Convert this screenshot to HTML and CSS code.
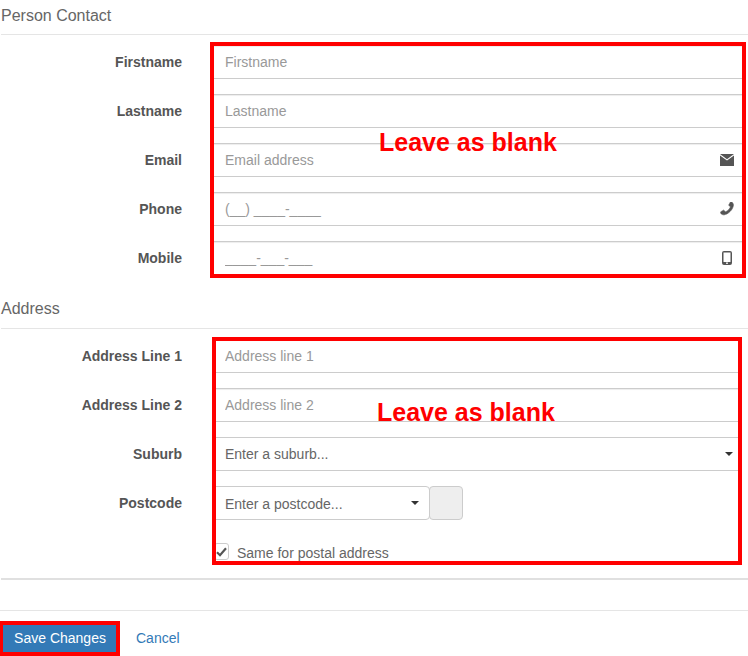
FILE: index.html
```html
<!DOCTYPE html>
<html lang="en">
  <head>
    <meta charset="UTF-8" />
    <title>Person Contact</title>
    <link rel="stylesheet" href="styles.css">
  </head>
  <body>
    <div class="page">
      <form class="contact-form">
        <h2 class="section-title">Person Contact</h2>
        <div class="fields fields-contact">
          <div class="form-row">
            <label class="row-label">Firstname</label>
            <div class="field"><input type="text" placeholder="Firstname" /></div>
          </div>
          <div class="form-row">
            <label class="row-label">Lastname</label>
            <div class="field"><input type="text" placeholder="Lastname" /></div>
          </div>
          <div class="form-row">
            <label class="row-label">Email</label>
            <div class="field">
              <input type="text" placeholder="Email address" />
              <svg class="icon" width="14" height="12" viewBox="0 0 14 12">
                <path d="M0 0h14L7 5.2z" />
                <path d="M0 1.4V12h14V1.4L7 6.6z" />
              </svg>
            </div>
          </div>
          <div class="form-row">
            <label class="row-label">Phone</label>
            <div class="field">
              <input type="text" placeholder="(__) ____-____" />
              <svg class="icon icon-phone" width="14" height="14" viewBox="128 128 1536 1536">
                <path transform="matrix(-1 0 0 1 1792 0)" d="M1600 1240q0 27-10 70.5t-21 68.5q-21 50-122 106-94 51-186 51-27 0-53-3.5t-57.5-12.5-47-14.5-55.5-20.5-49-18q-98-35-175-83-127-79-264-216t-216-264q-48-77-83-175-3-9-18-49t-20.5-55.5-14.5-47-12.5-57.5-3.5-53q0-92 51-186 56-101 106-122 25-11 68.5-21t70.5-10q14 0 21 3 18 6 53 76 11 19 30 54t35 63.5 31 53.5q3 4 17.5 25t21.5 35.5 7 28.5q0 20-28.5 50t-62 55-62 53-28.5 46q0 9 5 22.5t8.5 20.5 14 24 11.5 19q76 137 174 235t235 174q2 1 19 11.5t24 14 20.5 8.5 22.5 5q18 0 46-28.5t53-62 55-62 50-28.5q14 0 28.5 7t35.5 21.5 25 17.5q25 15 53.5 31t63.5 35 54 30q70 35 76 53 3 7 3 21z" />
              </svg>
            </div>
          </div>
          <div class="form-row">
            <label class="row-label">Mobile</label>
            <div class="field">
              <input type="text" placeholder="____-___-___" />
              <svg class="icon icon-mobile" width="10" height="14" viewBox="0 0 10 14">
                <path fill-rule="evenodd" d="M2 0h6a2 2 0 0 1 2 2v10a2 2 0 0 1-2 2H2a2 2 0 0 1-2-2V2a2 2 0 0 1 2-2zM1.5 1.5v9.5h7V1.5zM4.2 11.6v1.4h1.6v-1.4z" />
              </svg>
            </div>
          </div>
        </div>

        <h2 class="section-title section-title-address">Address</h2>
        <div class="fields fields-address">
          <div class="form-row">
            <label class="row-label">Address Line 1</label>
            <div class="field"><input type="text" placeholder="Address line 1" /></div>
          </div>
          <div class="form-row">
            <label class="row-label">Address Line 2</label>
            <div class="field"><input type="text" placeholder="Address line 2" /></div>
          </div>
          <div class="form-row">
            <label class="row-label">Suburb</label>
            <div class="field field-select">
              <span class="select-text">Enter a suburb...</span>
              <span class="caret"></span>
            </div>
          </div>
          <div class="form-row">
            <label class="row-label">Postcode</label>
            <div class="postcode">
              <div class="field field-select field-postcode">
                <span class="select-text">Enter a postcode...</span>
                <span class="caret"></span>
              </div>
              <span class="addon"></span>
            </div>
          </div>
          <div class="form-row check-row">
            <span></span>
            <label class="check-label">
              <span class="checkbox">
                <svg width="11" height="10" viewBox="0 0 11 10">
                  <path d="M1 5.2l3 3 6-7" fill="none" stroke="#555" stroke-width="2.2" />
                </svg>
              </span>
              <span class="check-text">Same for postal address</span>
            </label>
          </div>
        </div>
        <div class="section-end"></div>

        <div class="form-footer">
          <button type="button" class="btn-save">Save Changes</button>
          <a href="#" class="btn-cancel">Cancel</a>
        </div>
      </form>

      <!-- red annotations drawn on top of the form -->
      <div class="mark mark-contact"></div>
      <div class="mark mark-address"></div>
      <div class="mark mark-save"></div>
      <span class="mark-note note-contact">Leave as blank</span>
      <span class="mark-note note-address">Leave as blank</span>
    </div>
  </body>
</html>
```

FILE: styles.css
```css
* {
  padding: 0;
  margin: 0;
  box-sizing: border-box;
}

html,
body {
  height: 100%;
  overflow: hidden;
}

body {
  background-color: white;
  font-family: 'Liberation Sans', Arial, sans-serif;
  font-size: 14px;
  color: #555;
}

.page {
  position: relative;
  width: 748px;
  height: 656px;
}

.section-title {
  height: 35px;
  margin-left: 1px;
  padding-top: 6px;
  font-size: 16px;
  font-weight: normal;
  line-height: 19px;
  color: #666;
  border-bottom: 1px solid #e5e5e5;
}

.section-title-address {
  height: 36px;
}

.fields {
  display: flex;
  flex-direction: column;
  gap: 15px;
  padding-top: 10px;
}

.fields-contact {
  padding-right: 3px;
  padding-bottom: 18px;
}

.fields-address {
  padding-right: 8px;
}

.form-row {
  display: grid;
  grid-template-columns: 182px 1fr;
  column-gap: 31px;
  align-items: center;
}

.row-label {
  text-align: right;
  font-weight: bold;
}

.field {
  display: flex;
  align-items: center;
  height: 34px;
  padding: 0 11px;
  border: 1px solid #ccc;
  box-shadow: inset 0 1px 1px rgba(0, 0, 0, 0.075);
}

.field input {
  flex: 1;
  min-width: 0;
  border: 0;
  outline: 0;
  background: transparent;
  font-family: inherit;
  font-size: 14px;
  color: #555;
}

.field input::placeholder {
  color: #999;
  opacity: 1;
}

.icon {
  flex-shrink: 0;
  margin-right: -1px;
  fill: #555;
}

.icon-phone {
  stroke: #555;
  stroke-width: 70;
}

.icon-mobile {
  margin-right: 1px;
}

.field-select {
  justify-content: space-between;
  box-shadow: none;
  padding-right: 6px;
}

.select-text {
  color: #666;
}

.caret {
  width: 0;
  height: 0;
  border-top: 4px solid #333;
  border-left: 4px solid transparent;
  border-right: 4px solid transparent;
}

.postcode {
  display: flex;
}

.field-postcode {
  width: 217px;
  padding-right: 10px;
  border-radius: 0 4px 4px 0;
}

.field-postcode .select-text {
  padding-top: 2px;
}

.addon {
  width: 34px;
  height: 34px;
  margin-left: -1px;
  background-color: #eee;
  border: 1px solid #ccc;
  border-radius: 4px;
}

.check-row {
  margin-top: 8px;
}

.check-label {
  display: flex;
  align-items: center;
  gap: 8px;
  height: 17px;
  margin-left: 1px;
  color: #666;
}

.check-text {
  padding-top: 2px;
}

.checkbox {
  display: flex;
  align-items: center;
  justify-content: center;
  width: 15px;
  height: 17px;
  border: 1px solid #ccc;
  border-radius: 3px;
}

.section-end {
  height: 2px;
  margin: 18px 0 0 1px;
  background-color: #e0e0e0;
}

.form-footer {
  display: flex;
  align-items: center;
  margin-top: 30px;
  padding: 10px 0 0 2px;
  border-top: 1px solid #e5e5e5;
}

.btn-save {
  height: 34px;
  width: 116px;
  border: 1px solid #2e6da4;
  background-color: #337ab7;
  font-family: inherit;
  font-size: 14px;
  color: white;
}

.btn-cancel {
  margin-left: 18px;
  color: #337ab7;
  text-decoration: none;
}

.mark {
  position: absolute;
  border: 4px solid red;
}

.mark-contact {
  left: 210px;
  top: 42px;
  width: 536px;
  height: 236px;
}

.mark-address {
  left: 212px;
  top: 337px;
  width: 530px;
  height: 228px;
}

.mark-save {
  left: -1px;
  top: 621px;
  width: 121px;
  height: 35px;
}

.mark-note {
  position: absolute;
  font-size: 25px;
  font-weight: bold;
  line-height: 28px;
  color: red;
}

.note-contact {
  left: 379px;
  top: 128px;
}

.note-address {
  left: 377px;
  top: 398px;
}
```
